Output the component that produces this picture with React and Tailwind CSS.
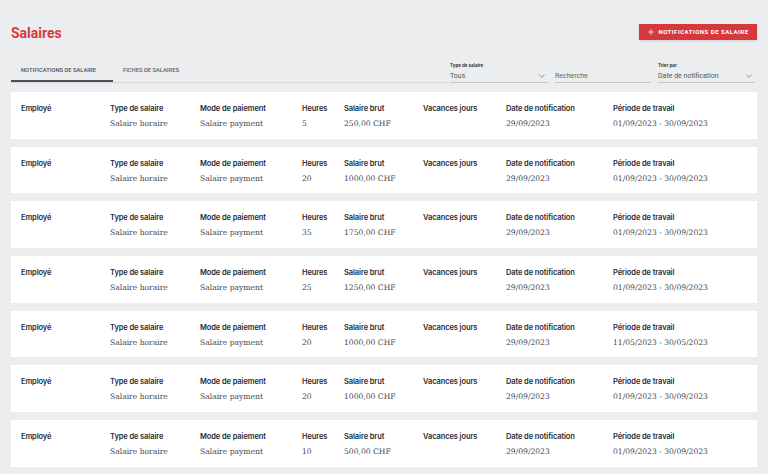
import { ChevronDown, Plus } from 'lucide-react'

const ROWS = [
  { heures: '5',  brut: '250,00 CHF',  date: '29/09/2023', periode: '01/09/2023 - 30/09/2023' },
  { heures: '20', brut: '1000,00 CHF', date: '29/09/2023', periode: '01/09/2023 - 30/09/2023' },
  { heures: '35', brut: '1750,00 CHF', date: '29/09/2023', periode: '01/09/2023 - 30/09/2023' },
  { heures: '25', brut: '1250,00 CHF', date: '29/09/2023', periode: '01/09/2023 - 30/09/2023' },
  { heures: '20', brut: '1000,00 CHF', date: '29/09/2023', periode: '11/05/2023 - 30/05/2023' },
  { heures: '20', brut: '1000,00 CHF', date: '29/09/2023', periode: '01/09/2023 - 30/09/2023' },
  { heures: '10', brut: '500,00 CHF',  date: '29/09/2023', periode: '01/09/2023 - 30/09/2023' },
]

const sans = "font-['Inter','Roboto',sans-serif]"
const serif = "font-['DejaVu_Serif','Liberation_Serif',serif]"

function Cell({ label, value, w }) {
  return (
    <div className={`${w} shrink-0 flex flex-col`}>
      <span className={`${sans} text-[7.5px] font-semibold leading-[12px] text-[#272b35] tracking-[-0.1px]`}>{label}</span>
      <span className={`${serif} text-[7.6px] leading-[12px] mt-[3px] text-[#43464e]`}>{value}</span>
    </div>
  )
}

function Card({ row }) {
  return (
    <div className="h-[46.7px] bg-white flex pl-[10px] pt-[11px]">
      <Cell w="w-[89px]" label="Employé" value="" />
      <Cell w="w-[90px]" label="Type de salaire" value="Salaire horaire" />
      <Cell w="w-[102px]" label="Mode de paiement" value="Salaire payment" />
      <Cell w="w-[42px]" label="Heures" value={row.heures} />
      <Cell w="w-[79px]" label="Salaire brut" value={row.brut} />
      <Cell w="w-[83px]" label="Vacances jours" value="" />
      <Cell w="w-[107px]" label="Date de notification" value={row.date} />
      <Cell w="w-[130px]" label="Période de travail" value={row.periode} />
    </div>
  )
}

function Select({ label, value, w }) {
  return (
    <div className={`${w} flex flex-col`}>
      <span className={`${sans} text-[4.5px] font-bold leading-[6px] h-[6px] text-[#333]`}>{label}</span>
      <div className="flex items-end justify-between h-[14px] pb-[2px] border-b border-[#c3c5ca]">
        <span className="font-['Roboto',sans-serif] text-[7px] leading-none text-[#555]">{value}</span>
        <ChevronDown size={10} strokeWidth={1.4} className="text-[#555] mr-[1px] mb-[-1px]" />
      </div>
    </div>
  )
}

export default function App() {
  return (
    <div className="w-[768px] h-[474px] bg-[#ecedef] overflow-hidden">
      <div className="w-[757px] pl-[11px]">
        {/* Header */}
        <div className="flex items-center justify-between pt-[24px] h-[40px]">
          <h1 className="font-['Roboto',sans-serif] font-bold text-[14px] leading-none text-[#d5393d] mt-[2px]">Salaires</h1>
          <button className="h-[16px] w-[118px] bg-[#d5393d] text-white flex items-center justify-center gap-[3px] shadow-sm">
            <Plus size={8} strokeWidth={2.5} />
            <span className="font-['Roboto',sans-serif] font-bold text-[6px] leading-none tracking-[0.5px]">NOTIFICATIONS DE SALAIRE</span>
          </button>
        </div>

        {/* Tabs + filters */}
        <div className="flex items-end mt-[21px] h-[22px]">
          <div className="w-[437px] flex items-end border-b border-[#d5d7db] h-[22px]">
            <div className="w-[102px] h-[21px] border-b-2 border-[#4b5058] pl-[10px] flex items-end pb-[6px]">
              <span className="font-['Roboto',sans-serif] text-[5.8px] leading-none font-medium text-[#4b5058]">NOTIFICATIONS DE SALAIRE</span>
            </div>
            <div className="h-[21px] pl-[10px] flex items-end pb-[8px]">
              <span className="font-['Roboto',sans-serif] text-[5.8px] leading-none font-medium text-[#5a5f68]">FICHES DE SALAIRES</span>
            </div>
          </div>
          <div className="flex gap-[7px] ml-[2px]">
            <Select w="w-[98px]" label="Type de salaire" value="Tous" />
            <div className="w-[96px] flex flex-col">
              <span className="h-[6px]" />
              <div className="flex items-end h-[14px] pb-[2px] border-b border-[#c3c5ca]">
                <span className="font-['Roboto',sans-serif] text-[7px] leading-none text-[#666]">Recherche</span>
              </div>
            </div>
            <Select w="w-[97px]" label="Trier par" value="Date de notification" />
          </div>
        </div>

        {/* Cards */}
        <div className="flex flex-col gap-[8px] mt-[9px]">
          {ROWS.map((r, i) => <Card key={i} row={r} />)}
        </div>
      </div>
    </div>
  )
}
